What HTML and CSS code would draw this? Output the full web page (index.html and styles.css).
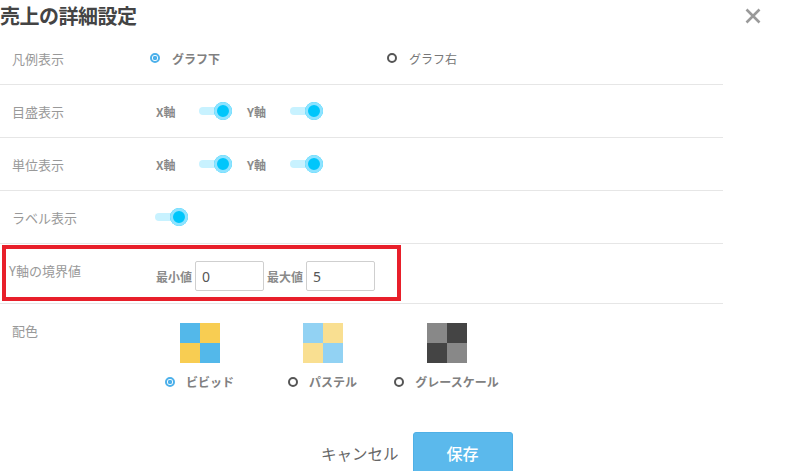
FILE: index.html
```html
<!DOCTYPE html>
<html lang="ja">
<head>
<meta charset="utf-8">
<title>売上の詳細設定</title>
<link rel="stylesheet" href="styles.css">
</head>
<body>
<div class="modal">
  <header class="head">
    <h1 class="title">売上の詳細設定</h1>
    <button class="close" aria-label="閉じる">
      <svg width="16" height="16" viewBox="0 0 16 16"><path d="M1.5 1.5 L14.5 14.5 M14.5 1.5 L1.5 14.5" stroke="#9a9a9a" stroke-width="2.6" fill="none"/></svg>
    </button>
  </header>

  <div class="rows">
    <div class="row">
      <div class="label">凡例表示</div>
      <div class="content legend">
        <label class="opt"><span class="radio on"></span><span class="opt-text">グラフ下</span></label>
        <label class="opt"><span class="radio"></span><span class="opt-text">グラフ右</span></label>
      </div>
    </div>

    <div class="row">
      <div class="label">目盛表示</div>
      <div class="content toggles">
        <span class="axis">X軸</span><span class="toggle"><span class="knob"></span></span>
        <span class="axis">Y軸</span><span class="toggle"><span class="knob"></span></span>
      </div>
    </div>

    <div class="row">
      <div class="label">単位表示</div>
      <div class="content toggles">
        <span class="axis">X軸</span><span class="toggle"><span class="knob"></span></span>
        <span class="axis">Y軸</span><span class="toggle"><span class="knob"></span></span>
      </div>
    </div>

    <div class="row">
      <div class="label">ラベル表示</div>
      <div class="content toggles">
        <span class="toggle"><span class="knob"></span></span>
      </div>
    </div>

    <div class="row bounds">
      <div class="redbox">
        <div class="label blabel">Y軸の境界値</div>
        <div class="content inputs">
          <span class="axis">最小値</span><input class="num" type="text" value="0">
          <span class="axis">最大値</span><input class="num" type="text" value="5">
        </div>
      </div>
    </div>

    <div class="row colors">
      <div class="label clabel">配色</div>
      <div class="palettes">
        <div class="pal">
          <div class="swatch">
            <span class="c1"></span><span class="c2"></span><span class="c2"></span><span class="c1"></span>
          </div>
          <label class="opt"><span class="radio on"></span><span class="opt-text">ビビッド</span></label>
        </div>
        <div class="pal">
          <div class="swatch pastel">
            <span class="c1"></span><span class="c2"></span><span class="c2"></span><span class="c1"></span>
          </div>
          <label class="opt"><span class="radio"></span><span class="opt-text">パステル</span></label>
        </div>
        <div class="pal">
          <div class="swatch gray">
            <span class="c1"></span><span class="c2"></span><span class="c2"></span><span class="c1"></span>
          </div>
          <label class="opt"><span class="radio"></span><span class="opt-text">グレースケール</span></label>
        </div>
      </div>
    </div>
  </div>

  <footer class="foot">
    <button class="cancel">キャンセル</button>
    <button class="save">保存</button>
  </footer>
</div>
</body>
</html>
```

FILE: styles.css
```css
* { box-sizing: border-box; }
html, body { margin: 0; padding: 0; background: #fff; }
body {
  font-family: "Noto Sans CJK JP", "Noto Sans", sans-serif;
  color: #888;
  width: 788px;
  height: 471px;
  overflow: hidden;
}
.modal { width: 788px; }

.head {
  display: flex;
  justify-content: space-between;
  align-items: center;
  height: 32px;
  padding-right: 27px;
}
.title {
  margin: 0;
  font-size: 20px;
  font-weight: 700;
  color: #444;
  line-height: 32px;
  letter-spacing: -0.5px;
}
.close {
  border: 0;
  background: none;
  padding: 0;
  width: 16px;
  height: 16px;
  display: block;
}
.close svg { display: block; }

.rows { width: 723px; }
.row {
  display: flex;
  align-items: center;
  height: 53px;
  border-bottom: 1px solid #e6e6e6;
}
.label {
  width: 150px;
  padding-left: 12px;
  font-size: 13px;
  color: #999;
  flex: none;
}
.content { display: flex; align-items: center; }

.opt { display: flex; align-items: center; cursor: pointer; }
.radio {
  width: 10px;
  height: 10px;
  border-radius: 50%;
  border: 2px solid #555;
  flex: none;
}
.radio.on {
  border-color: #4cb0ea;
  background: radial-gradient(circle, #4cb0ea 0 2px, #fff 2.3px);
}
.opt-text {
  margin-left: 12px;
  font-size: 12px;
  font-weight: 700;
  color: #808080;
}
.legend .opt { width: 237px; }
.legend .opt:last-child .opt-text { font-weight: 400; color: #777; }

.toggles { padding-left: 6px; }
.axis {
  font-size: 12px;
  font-weight: 700;
  color: #8a8a8a;
}
.toggles .axis { width: 43px; }
.toggle {
  position: relative;
  width: 33px;
  height: 18px;
  display: inline-block;
  margin-right: 15px;
}
.toggle::before {
  content: "";
  position: absolute;
  left: 0;
  top: 5px;
  width: 24px;
  height: 8px;
  border-radius: 4px;
  background: #c8f2ff;
}
.knob {
  position: absolute;
  right: 0;
  top: 0;
  width: 18px;
  height: 18px;
  border-radius: 50%;
  background: #00c6fb;
  box-shadow: inset 0 0 0 3px #8ee3ff;
}
.toggles > .toggle:first-child { margin-left: -1px; }

.row.bounds { height: 60px; align-items: flex-start; }
.redbox {
  margin-top: 1px;
  margin-left: 2px;
  width: 399px;
  height: 56px;
  border: 4px solid #e81f2a;
  padding-left: 3px;
  display: flex;
  align-items: center;
}
.blabel { width: 147px; padding-left: 0; padding-bottom: 6px; }
.inputs { padding-top: 6px; }
.inputs .axis { margin-right: 3px; }
.num {
  width: 69px;
  height: 30px;
  border: 1px solid #cfcfcf;
  border-radius: 2px;
  padding: 0 0 0 6px;
  font-family: "Noto Sans", "Noto Sans CJK JP", sans-serif;
  font-size: 14px;
  color: #555;
  margin-right: 3px;
  outline: none;
}

.row.colors {
  height: auto;
  border-bottom: 0;
  align-items: flex-start;
}
.clabel { padding-top: 17px; }
.palettes {
  display: flex;
  margin-left: -11px;
  padding-top: 19px;
}
.pal {
  width: 123px;
  display: flex;
  flex-direction: column;
  align-items: center;
}
.pal:nth-child(1) { margin-left: -1px; }
.pal:last-child { width: 125px; }
.swatch {
  display: grid;
  grid-template-columns: 20px 20px;
  grid-template-rows: 20px 20px;
  width: 40px;
  height: 40px;
}
.swatch .c1 { background: #53b8ea; }
.swatch .c2 { background: #f8cd52; }
.swatch.pastel .c1 { background: #92d2f3; }
.swatch.pastel .c2 { background: #f9df91; }
.swatch.gray .c1 { background: #888888; }
.swatch.gray .c2 { background: #444444; }
.pal .opt { margin-top: 10px; }
.pal .opt-text { margin-left: 11px; }

.foot {
  display: flex;
  align-items: center;
  padding-left: 321px;
  margin-top: 42px;
}
.cancel {
  border: 0;
  background: none;
  padding: 0;
  font-family: "Noto Sans CJK JP", sans-serif;
  font-size: 15.5px;
  color: #666;
  margin-right: 14px;
}
.save {
  width: 100px;
  height: 42px;
  border: 1px solid #4fb0e6;
  border-radius: 3px;
  background: #5bb9ec;
  color: #fff;
  font-family: "Noto Sans CJK JP", sans-serif;
  font-size: 16px;
  font-weight: 500;
}
```
